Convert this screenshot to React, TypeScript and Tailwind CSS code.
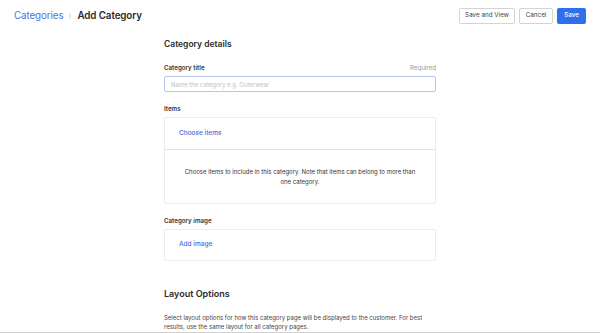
import React from "react";

export default function App() {
  return (
    <div className="w-[600px] h-[333px] overflow-hidden bg-white text-[#333]" style={{ fontFamily: "Inter, 'Noto Sans', sans-serif" }}>
      <div className="h-[32px] flex items-center justify-between px-[14px]">
        <div className="flex items-center">
          <span className="text-[9.8px] text-[#4a73e0] tracking-[-0.1px]">Categories</span>
          <svg width="6" height="6" viewBox="0 0 6 6" className="mx-[4px]">
            <path d="M2 1 L4 3 L2 5" fill="none" stroke="#c4c4c4" strokeWidth="0.8" />
          </svg>
          <span className="text-[9.8px] font-semibold text-[#2a2a2a] tracking-[-0.1px]">Add Category</span>
        </div>
        <div className="flex items-center gap-[4px]">
          <button className="h-[16px] w-[56px] border border-[#d4d4d4] rounded-[2px] text-[6.3px] text-[#444] bg-white">Save and View</button>
          <button className="h-[16px] w-[34px] border border-[#d4d4d4] rounded-[2px] text-[6.3px] text-[#444] bg-white">Cancel</button>
          <button className="h-[16px] w-[29px] rounded-[2px] text-[6.3px] text-white bg-[#2f6fed] font-medium">Save</button>
        </div>
      </div>
      <div className="w-[272px] ml-[164px]">
        <div className="mt-[6px] leading-[12px] text-[8.5px] font-semibold text-[#2a2a2a]">Category details</div>
        <div className="mt-[13px] h-[10px] flex items-center justify-between text-[6.2px]">
          <span className="font-semibold text-[#333]">Category title</span>
          <span className="text-[#999]">Required</span>
        </div>
        <div className="mt-[3px] h-[16px] border border-[#b8c7f2] rounded-[2px] flex items-center pl-[6px] text-[6px] text-[#c2c2c2]">
          Name the category e.g. Outerwear
        </div>
        <div className="mt-[12px] h-[10px] flex items-center text-[6.2px] font-semibold text-[#333]">Items</div>
        <div className="mt-[3px] border border-[#ececec] rounded-[2px]">
          <div className="h-[32px] flex items-center pl-[14px] border-b border-[#e2e2e2] text-[6.5px] text-[#3d6ee0] font-medium">Choose items</div>
          <div className="h-[53px] flex items-center justify-center px-[16px] text-center text-[6px] leading-[10px] text-[#333]">
            Choose items to include in this category. Note that items can belong to more than one category.
          </div>
        </div>
        <div className="mt-[12px] h-[10px] flex items-center text-[6.2px] font-semibold text-[#333]">Category image</div>
        <div className="mt-[3px] h-[32px] border border-[#ececec] rounded-[2px] flex items-center pl-[14px] text-[6.5px] text-[#3d6ee0] font-medium">Add image</div>
        <div className="mt-[26px] leading-[14px] text-[9px] font-semibold text-[#2a2a2a]">Layout Options</div>
        <div className="mt-[12px] text-[6px] leading-[9px] text-[#444] pr-[4px]">
          Select layout options for how this category page will be displayed to the customer. For best results, use the same layout for all category pages.
        </div>
      </div>
      <div className="mt-[1px] border-t border-[#d0d0d0]" />
    </div>
  );
}
